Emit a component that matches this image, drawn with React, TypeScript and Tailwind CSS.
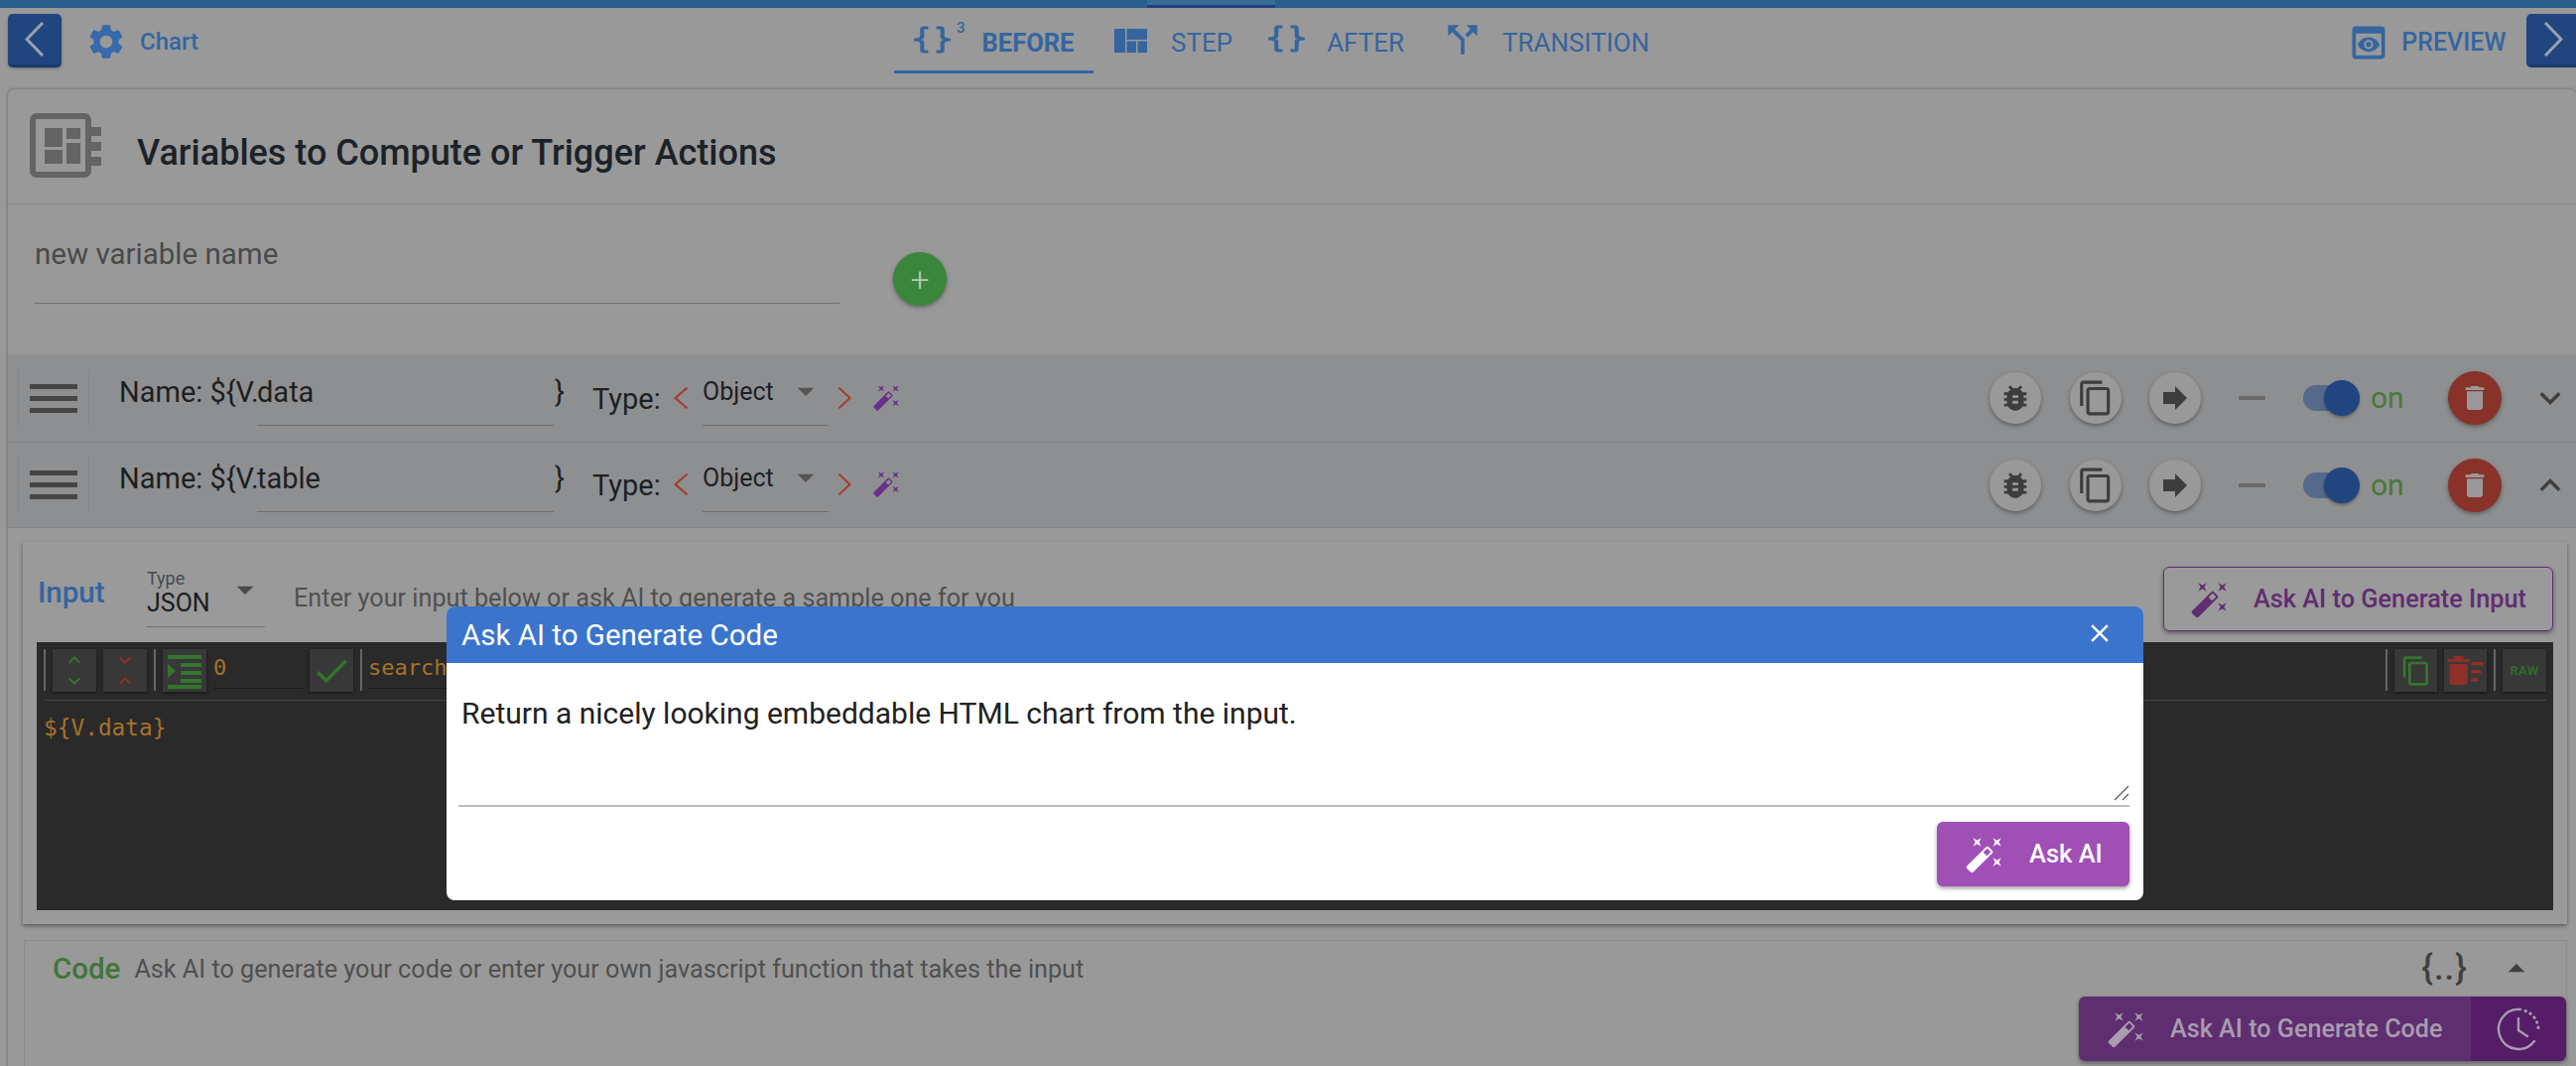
import React from "react";
import { MdSettings, MdBugReport, MdOutlineContentCopy, MdForward, MdDelete, MdKeyboardArrowDown, MdKeyboardArrowUp, MdCallSplit, MdArrowDropDown, MdArrowDropUp, MdClose, MdCheck, MdPreview } from "react-icons/md";

const WAND = "M7.5,5.6L5,7L6.4,4.5L5,2L7.5,3.4L10,2L8.6,4.5L10,7L7.5,5.6M19.5,15.4L22,14L20.6,16.5L22,19L19.5,17.6L17,19L18.4,16.5L17,14L19.5,15.4M22,2L20.6,4.5L22,7L19.5,5.6L17,7L18.4,4.5L17,2L19.5,3.4L22,2M13.34,12.78L15.78,10.34L13.66,8.22L11.22,10.66L13.34,12.78M14.37,7.29L16.71,9.63C17.1,10 17.1,10.65 16.71,11.04L5.04,22.71C4.65,23.1 4,23.1 3.63,22.71L1.29,20.37C0.9,20 0.9,19.35 1.29,18.96L12.96,7.29C13.35,6.9 14,6.9 14.37,7.29Z";
const BRACES = "M8,3A2,2 0 0,0 6,5V9A2,2 0 0,1 4,11H3V13H4A2,2 0 0,1 6,15V19A2,2 0 0,0 8,21H10V19H8V14A2,2 0 0,0 6,12A2,2 0 0,0 8,10V5H10V3M16,3A2,2 0 0,1 18,5V9A2,2 0 0,0 20,11H21V13H20A2,2 0 0,0 18,15V19A2,2 0 0,1 16,21H14V19H16V14A2,2 0 0,1 18,12A2,2 0 0,1 16,10V5H14V3H16Z";

function Wand({ className }: { className: string }) {
  return <svg viewBox="0 0 24 24" fill="currentColor" className={className}><path d={WAND} /></svg>;
}
function Braces({ className }: { className: string }) {
  return <svg viewBox="0 0 24 24" fill="currentColor" preserveAspectRatio="none" className={className}><path d={BRACES} /></svg>;
}
function Chev({ className, right, width = 3 }: { className: string; right?: boolean; width?: number }) {
  return (
    <svg viewBox="0 0 20 34" fill="none" stroke="currentColor" strokeWidth={width} preserveAspectRatio="none" className={className}>
      <polyline points={right ? "2,1 18,17 2,33" : "18,1 2,17 18,33"} />
    </svg>
  );
}
function Quilt({ className }: { className: string }) {
  return (
    <svg viewBox="0 0 33 24" fill="currentColor" className={className}>
      <rect x="0" y="0" width="11" height="24" />
      <rect x="12.5" y="0" width="20.5" height="11" />
      <rect x="12.5" y="12.5" width="9.5" height="11.5" />
      <rect x="23.5" y="12.5" width="9.5" height="11.5" />
    </svg>
  );
}
function Board({ className }: { className: string }) {
  return (
    <svg viewBox="0 0 72 65" className={className}>
      <rect x="3" y="3" width="56" height="59" rx="4" fill="none" stroke="#646464" strokeWidth="6" />
      <rect x="59" y="14" width="13" height="9" fill="#646464" />
      <rect x="59" y="29" width="13" height="9" fill="#646464" />
      <rect x="59" y="44" width="13" height="9" fill="#646464" />
      <rect x="15" y="15" width="18" height="19" fill="#646464" />
      <rect x="37" y="15" width="14" height="11" fill="#646464" />
      <rect x="15" y="37" width="18" height="14" fill="#646464" />
      <rect x="37" y="30" width="14" height="21" fill="#646464" />
    </svg>
  );
}
function Clock({ className }: { className: string }) {
  return (
    <svg viewBox="0 0 44 44" fill="none" stroke="currentColor" strokeWidth="2.4" strokeLinecap="round" className={className}>
      <path d="M24 2 A20 20 0 1 0 38 34" />
      <path d="M22 11 V23 L31 29" />
      <path d="M29 3.5 A20 20 0 0 1 42 24" strokeDasharray="0.5 5" strokeWidth="3" />
    </svg>
  );
}
function CircleBtn({ children }: { children: React.ReactNode }) {
  return (
    <div className="w-[52px] h-[52px] rounded-full bg-[#999999] flex items-center justify-center text-[#3d3d3d] shadow-[0_2px_4px_rgba(0,0,0,0.35)]">
      {children}
    </div>
  );
}
function Row({ name, pad, up, h }: { name: string; pad: string; up?: boolean; h: string }) {
  return (
    <div className={`flex items-center bg-[#8e8f91] border-b border-[#848587] ${h}`}>
      <div className={`self-start flex items-start text-[#1d1f22] ${pad}`}>
        <div className="ml-[10px] w-[72px] h-[56px] -mt-[6px] border-x border-[#858688] flex flex-col items-center justify-center gap-[7px]">
          <div className="w-[48px] h-[5px] bg-[#454545]" />
          <div className="w-[48px] h-[5px] bg-[#454545]" />
          <div className="w-[48px] h-[5px] bg-[#454545]" />
        </div>
        <div className="ml-[30px] w-[139px] text-[29px] leading-[32px] whitespace-nowrap">Name: {"${V."}</div>
        <div className="w-[299px] h-[50px] border-b border-[#6f6f6f] text-[29px] leading-[32px]">{name}</div>
        <div className="ml-[1px] w-[38px] text-[29px] leading-[32px]">{"}"}</div>
        <div className="w-[68px] text-[29px] leading-[32px] mt-[7px]">Type:</div>
        <Chev className="w-[15px] h-[22px] ml-[14px] mt-[11px] text-[#a63a2e] shrink-0" />
        <div className="ml-[14px] w-[127px] h-[50px] border-b border-[#6f6f6f] flex items-start text-[25px] leading-[29px]">
          <span className="mt-[1px]">Object</span>
          <MdArrowDropDown className="w-[40px] h-[40px] ml-[12px] -mt-[5px] text-[#555555]" />
        </div>
        <Chev right className="w-[14px] h-[22px] ml-[9px] mt-[11px] text-[#a63a2e] shrink-0" />
        <Wand className="w-[29px] h-[29px] ml-[21px] mt-[7px] text-[#69308a]" />
      </div>
      <div className="ml-auto flex items-center pr-[5px]">
        <CircleBtn><MdBugReport className="w-[34px] h-[34px]" /></CircleBtn>
        <div className="ml-[29px]"><CircleBtn><MdOutlineContentCopy className="w-[38px] h-[38px]" /></CircleBtn></div>
        <div className="ml-[28px]"><CircleBtn><MdForward className="w-[36px] h-[36px]" /></CircleBtn></div>
        <div className="ml-[38px] w-[27px] h-[4px] bg-[#6b6b6b]" />
        <div className="ml-[38px] w-[54px] h-[26px] rounded-full bg-[#55698a] flex items-center justify-end">
          <div className="w-[36px] h-[36px] -mr-[3px] shrink-0 rounded-full bg-[#21467f] shadow-[0_2px_3px_rgba(0,0,0,0.3)]" />
        </div>
        <div className="ml-[14px] w-[78px] text-[30px] leading-[32px] text-[#47783d]">on</div>
        <div className="w-[54px] h-[54px] rounded-full bg-[#88322a] flex items-center justify-center text-[#999999] shadow-[0_2px_4px_rgba(0,0,0,0.35)]">
          <MdDelete className="w-[32px] h-[32px]" />
        </div>
        <div className="ml-[28px] text-[#404040]">
          {up ? <MdKeyboardArrowUp className="w-[42px] h-[42px]" /> : <MdKeyboardArrowDown className="w-[42px] h-[42px]" />}
        </div>
      </div>
    </div>
  );
}
function ToolBtn({ children, w = "w-[44px]" }: { children: React.ReactNode; w?: string }) {
  return <div className={`${w} h-[43px] bg-[#383838] shadow-[0_1px_3px_rgba(0,0,0,0.5)] flex items-center justify-center shrink-0`}>{children}</div>;
}
function Sep() {
  return <div className="w-[2px] h-[42px] bg-[#666666] shrink-0" />;
}

export default function App() {
  return (
    <div className="relative h-[1074px] w-[2596px] overflow-hidden bg-[#999999] font-['Roboto',sans-serif]">
      <div className="h-[8px] bg-[#2a5f8d] flex">
        <div className="ml-[1156px] w-[129px] h-[8px] bg-[#366e96] border-b-[3px] border-[#23417d]" />
      </div>

      <div className="h-[82px] flex items-start pt-[6px] text-[#35659f] text-[26px] leading-[30px]">
        <div className="ml-[8px] w-[54px] h-[54px] rounded-[5px] bg-[#21467f] border-b-[3px] border-[#1a3a6c] flex items-center justify-center shrink-0 shadow-[0_1px_3px_rgba(0,0,0,0.3)]">
          <Chev className="w-[20px] h-[35px] text-[#99a2ad]" />
        </div>
        <MdSettings className="ml-[24px] mt-[7px] w-[42px] h-[42px] shrink-0 text-[#366aaa]" />
        <div className="ml-[13px] mt-[13px] text-[24px] font-medium">Chart</div>

        <div className="ml-[701px] w-[201px] h-[60px] shrink-0 border-b-[3px] border-[#35659f] flex items-start">
          <Braces className="ml-[14px] mt-[8px] w-[49px] h-[36px]" />
          <span className="text-[15px] leading-[14px] mt-[7px] font-medium">3</span>
          <span className="ml-[17px] mt-[14px] text-[25.5px] font-bold">BEFORE</span>
        </div>
        <Quilt className="ml-[21px] mt-[15px] w-[33px] h-[24px] shrink-0" />
        <div className="ml-[24px] mt-[14px]">STEP</div>
        <Braces className="ml-[30px] mt-[7px] w-[49px] h-[36px] shrink-0" />
        <div className="ml-[16px] mt-[14px]">AFTER</div>
        <MdCallSplit className="ml-[37px] mt-[4px] w-[44px] h-[44px] shrink-0" />
        <div className="ml-[18px] mt-[14px]">TRANSITION</div>

        <MdPreview className="ml-[703px] mt-[7px] w-[44px] h-[44px] shrink-0" />
        <div className="ml-[11px] mt-[14px] text-[25px] font-medium">PREVIEW</div>
        <div className="ml-[21px] w-[54px] h-[54px] rounded-[5px] bg-[#21467f] border-b-[3px] border-[#1a3a6c] flex items-center justify-center shrink-0">
          <Chev right className="w-[20px] h-[35px] text-[#99a2ad]" />
        </div>
      </div>

      <div className="ml-[8px] rounded-t-[6px] bg-[#999999] shadow-[0_-1px_3px_rgba(0,0,0,0.15),-1px_0_3px_rgba(0,0,0,0.15)]">
        <div className="h-[116px] border-b border-[#888888] flex items-center">
          <Board className="ml-[22px] w-[72px] h-[65px] -mt-[3px]" />
          <div className="ml-[36px] text-[36px] leading-[40px] font-medium text-[#1c2228] mt-[12px]">Variables to Compute or Trigger Actions</div>
        </div>

        <div className="h-[151px] flex items-start">
          <div className="ml-[27px] w-[811px] h-[100px] border-b border-[#707070] pt-[33px] text-[29.5px] leading-[34px] text-[#4a4a4a]">new variable name</div>
          <div className="ml-[54px] mt-[48px] w-[54px] h-[54px] rounded-full bg-[#3a863a] text-[#b5c9b5] flex items-center justify-center text-[34px] font-light leading-[32px] shadow-[0_2px_4px_rgba(0,0,0,0.35)]">+</div>
        </div>

        <Row name="data" pad="pt-[22px]" h="h-[89px]" />
        <Row name="table" pad="pt-[20px]" h="h-[86px]" up />

        <div className="ml-[15px] mt-[14px] mr-[9px] h-[385px] bg-[#9a9a9a] shadow-[0_2px_4px_rgba(0,0,0,0.4)] px-[14px]">
          <div className="h-[101px] flex items-start">
            <div className="ml-[1px] mt-[35px] w-[110px] text-[29.5px] leading-[32px] font-medium text-[#35659f]">Input</div>
            <div className="w-[119px] h-[86px] border-b border-[#707070] pt-[27px]">
              <div className="text-[18px] leading-[20px] text-[#4a4a4a]">Type</div>
              <div className="flex items-start text-[#1c1c1c] text-[25px] leading-[29px]">
                JSON
                <MdArrowDropDown className="w-[40px] h-[40px] ml-[15px] -mt-[19px] text-[#4a4a4a]" />
              </div>
            </div>
            <div className="ml-[29px] mt-[42px] text-[25.2px] leading-[30px] text-[#505050] whitespace-nowrap">Enter your input below or ask AI to generate a sample one for you</div>
            <div className="ml-auto mt-[25px] w-[393px] h-[65px] rounded-[6px] border-[1.5px] border-[#5f2e70] flex items-center text-[#5f2e70] shadow-[0_2px_4px_rgba(0,0,0,0.4)]">
              <Wand className="ml-[26px] w-[40px] h-[40px]" />
              <span className="ml-[24px] text-[25.3px] font-medium whitespace-nowrap">Ask AI to Generate Input</span>
            </div>
          </div>
          <div className="h-[270px] bg-[#2a2a2a] px-[7px] pt-[7px]">
            <div className="h-[52px] border-b border-[#444444] flex items-start gap-[7px]">
              <Sep />
              <ToolBtn>
                <div className="flex flex-col items-center -space-y-[3px] text-[#35752f]">
                  <MdKeyboardArrowUp className="w-[24px] h-[24px]" />
                  <MdKeyboardArrowDown className="w-[24px] h-[24px]" />
                </div>
              </ToolBtn>
              <ToolBtn>
                <div className="flex flex-col items-center -space-y-[3px] text-[#8f3028]">
                  <MdKeyboardArrowDown className="w-[24px] h-[24px]" />
                  <MdKeyboardArrowUp className="w-[24px] h-[24px]" />
                </div>
              </ToolBtn>
              <Sep />
              <ToolBtn>
                <svg viewBox="0 0 36 36" fill="#35752f" className="w-[36px] h-[36px]">
                  <rect x="1" y="2" width="34" height="4" /><rect x="14" y="10" width="21" height="4" /><rect x="14" y="18" width="21" height="4" /><rect x="14" y="26" width="21" height="4" /><rect x="1" y="32" width="34" height="4" /><path d="M1 11 L9 18 L1 25 Z" />
                </svg>
              </ToolBtn>
              <div className="w-[90px] h-[40px] border-b border-[#1a1a1a] font-['DejaVu_Sans_Mono',monospace] text-[22px] leading-[38px] text-[#a8712a] shrink-0">0</div>
              <ToolBtn><MdCheck className="w-[42px] h-[42px] text-[#35752f]" /></ToolBtn>
              <Sep />
              <div className="-ml-[1px] w-[300px] h-[40px] border-b border-[#1a1a1a] font-['DejaVu_Sans_Mono',monospace] text-[22px] leading-[38px] text-[#a8712a] shrink-0">search</div>
              <div className="ml-auto" />
              <Sep />
              <ToolBtn w="w-[43px]"><MdOutlineContentCopy className="w-[32px] h-[32px] text-[#35752f]" /></ToolBtn>
              <ToolBtn w="w-[43px]">
                <svg viewBox="0 0 36 30" fill="#8f3028" className="w-[37px] h-[30px]">
                  <rect x="0" y="3" width="22" height="3" /><rect x="6" y="0" width="10" height="3" /><path d="M2 8 H20 V26 a3 3 0 0 1 -3 3 H5 a3 3 0 0 1 -3 -3 Z" /><rect x="24" y="6" width="12" height="3.5" /><rect x="24" y="14" width="10" height="3.5" /><rect x="24" y="22" width="7" height="3.5" />
                </svg>
              </ToolBtn>
              <Sep />
              <ToolBtn><span className="text-[13px] font-bold text-[#2f6a2a] tracking-wide">RAW</span></ToolBtn>
            </div>
            <div className="mt-[12px] font-['DejaVu_Sans_Mono',monospace] text-[22.8px] leading-[30px] text-[#a8712a]">{"${V.data}"}</div>
          </div>
        </div>

        <div className="ml-[16px] mt-[16px] mr-[9px] h-[130px] border border-[#8c8c8c] flex flex-col">
          <div className="h-[56px] flex items-start">
            <div className="ml-[28px] mt-[12px] text-[29.5px] leading-[32px] font-medium text-[#427539]">Code</div>
            <div className="ml-[14px] mt-[14px] text-[25.2px] leading-[30px] text-[#505050] whitespace-nowrap">Ask AI to generate your code or enter your own javascript function that takes the input</div>
            <div className="ml-auto mt-[11px] text-[35px] leading-[34px] tracking-[1px] font-medium text-[#404040]">{"{..}"}</div>
            <MdArrowDropUp className="ml-[29px] mt-[8px] mr-[30px] w-[40px] h-[40px] text-[#404040]" />
          </div>
          <div className="flex justify-end">
            <div className="w-[491px] h-[65px] rounded-[6px] overflow-hidden flex text-[#a89cae] shadow-[0_2px_4px_rgba(0,0,0,0.4)]">
              <div className="flex-1 bg-[#5f2e70] flex items-center">
                <Wand className="ml-[28px] w-[40px] h-[40px]" />
                <span className="ml-[24px] text-[25.2px] font-medium whitespace-nowrap">Ask AI to Generate Code</span>
              </div>
              <div className="w-[96px] bg-[#551c68] flex items-center justify-center">
                <Clock className="w-[44px] h-[44px]" />
              </div>
            </div>
          </div>
        </div>
      </div>

      <div className="absolute left-[450px] top-[611px] w-[1710px] h-[296px] rounded-[8px] overflow-hidden bg-white flex flex-col">
        <div className="h-[57px] shrink-0 bg-[#3a74cc] flex items-center pl-[15px] pr-[29px] text-white">
          <span className="text-[29.5px] leading-[32px]">Ask AI to Generate Code</span>
          <MdClose className="ml-auto -mt-[4px] w-[30px] h-[30px]" />
        </div>
        <div className="relative ml-[12px] mr-[14px] h-[145px] border-b-2 border-[#bdbdbd] pt-[20px]">
          <textarea
            readOnly
            defaultValue="Return a nicely looking embeddable HTML chart from the input."
            className="w-full h-[121px] block resize-none pl-[3px] pt-[15px] text-[30px] leading-[32px] text-[#212121] outline-none"
          />
          <svg viewBox="0 0 16 16" stroke="#666666" strokeWidth="1.4" className="absolute right-0 bottom-[4px] w-[16px] h-[16px]">
            <line x1="1" y1="15" x2="15" y2="1" />
            <line x1="9" y1="15" x2="15" y2="9" />
          </svg>
        </div>
        <div className="flex justify-end pr-[14px] pt-[15px]">
          <div className="w-[194px] h-[65px] rounded-[6px] bg-[#a04fb5] text-white flex items-center shadow-[0_2px_4px_rgba(0,0,0,0.4)]">
            <Wand className="ml-[28px] w-[40px] h-[40px]" />
            <span className="ml-[25px] text-[25.5px] font-medium">Ask AI</span>
          </div>
        </div>
      </div>
    </div>
  );
}
